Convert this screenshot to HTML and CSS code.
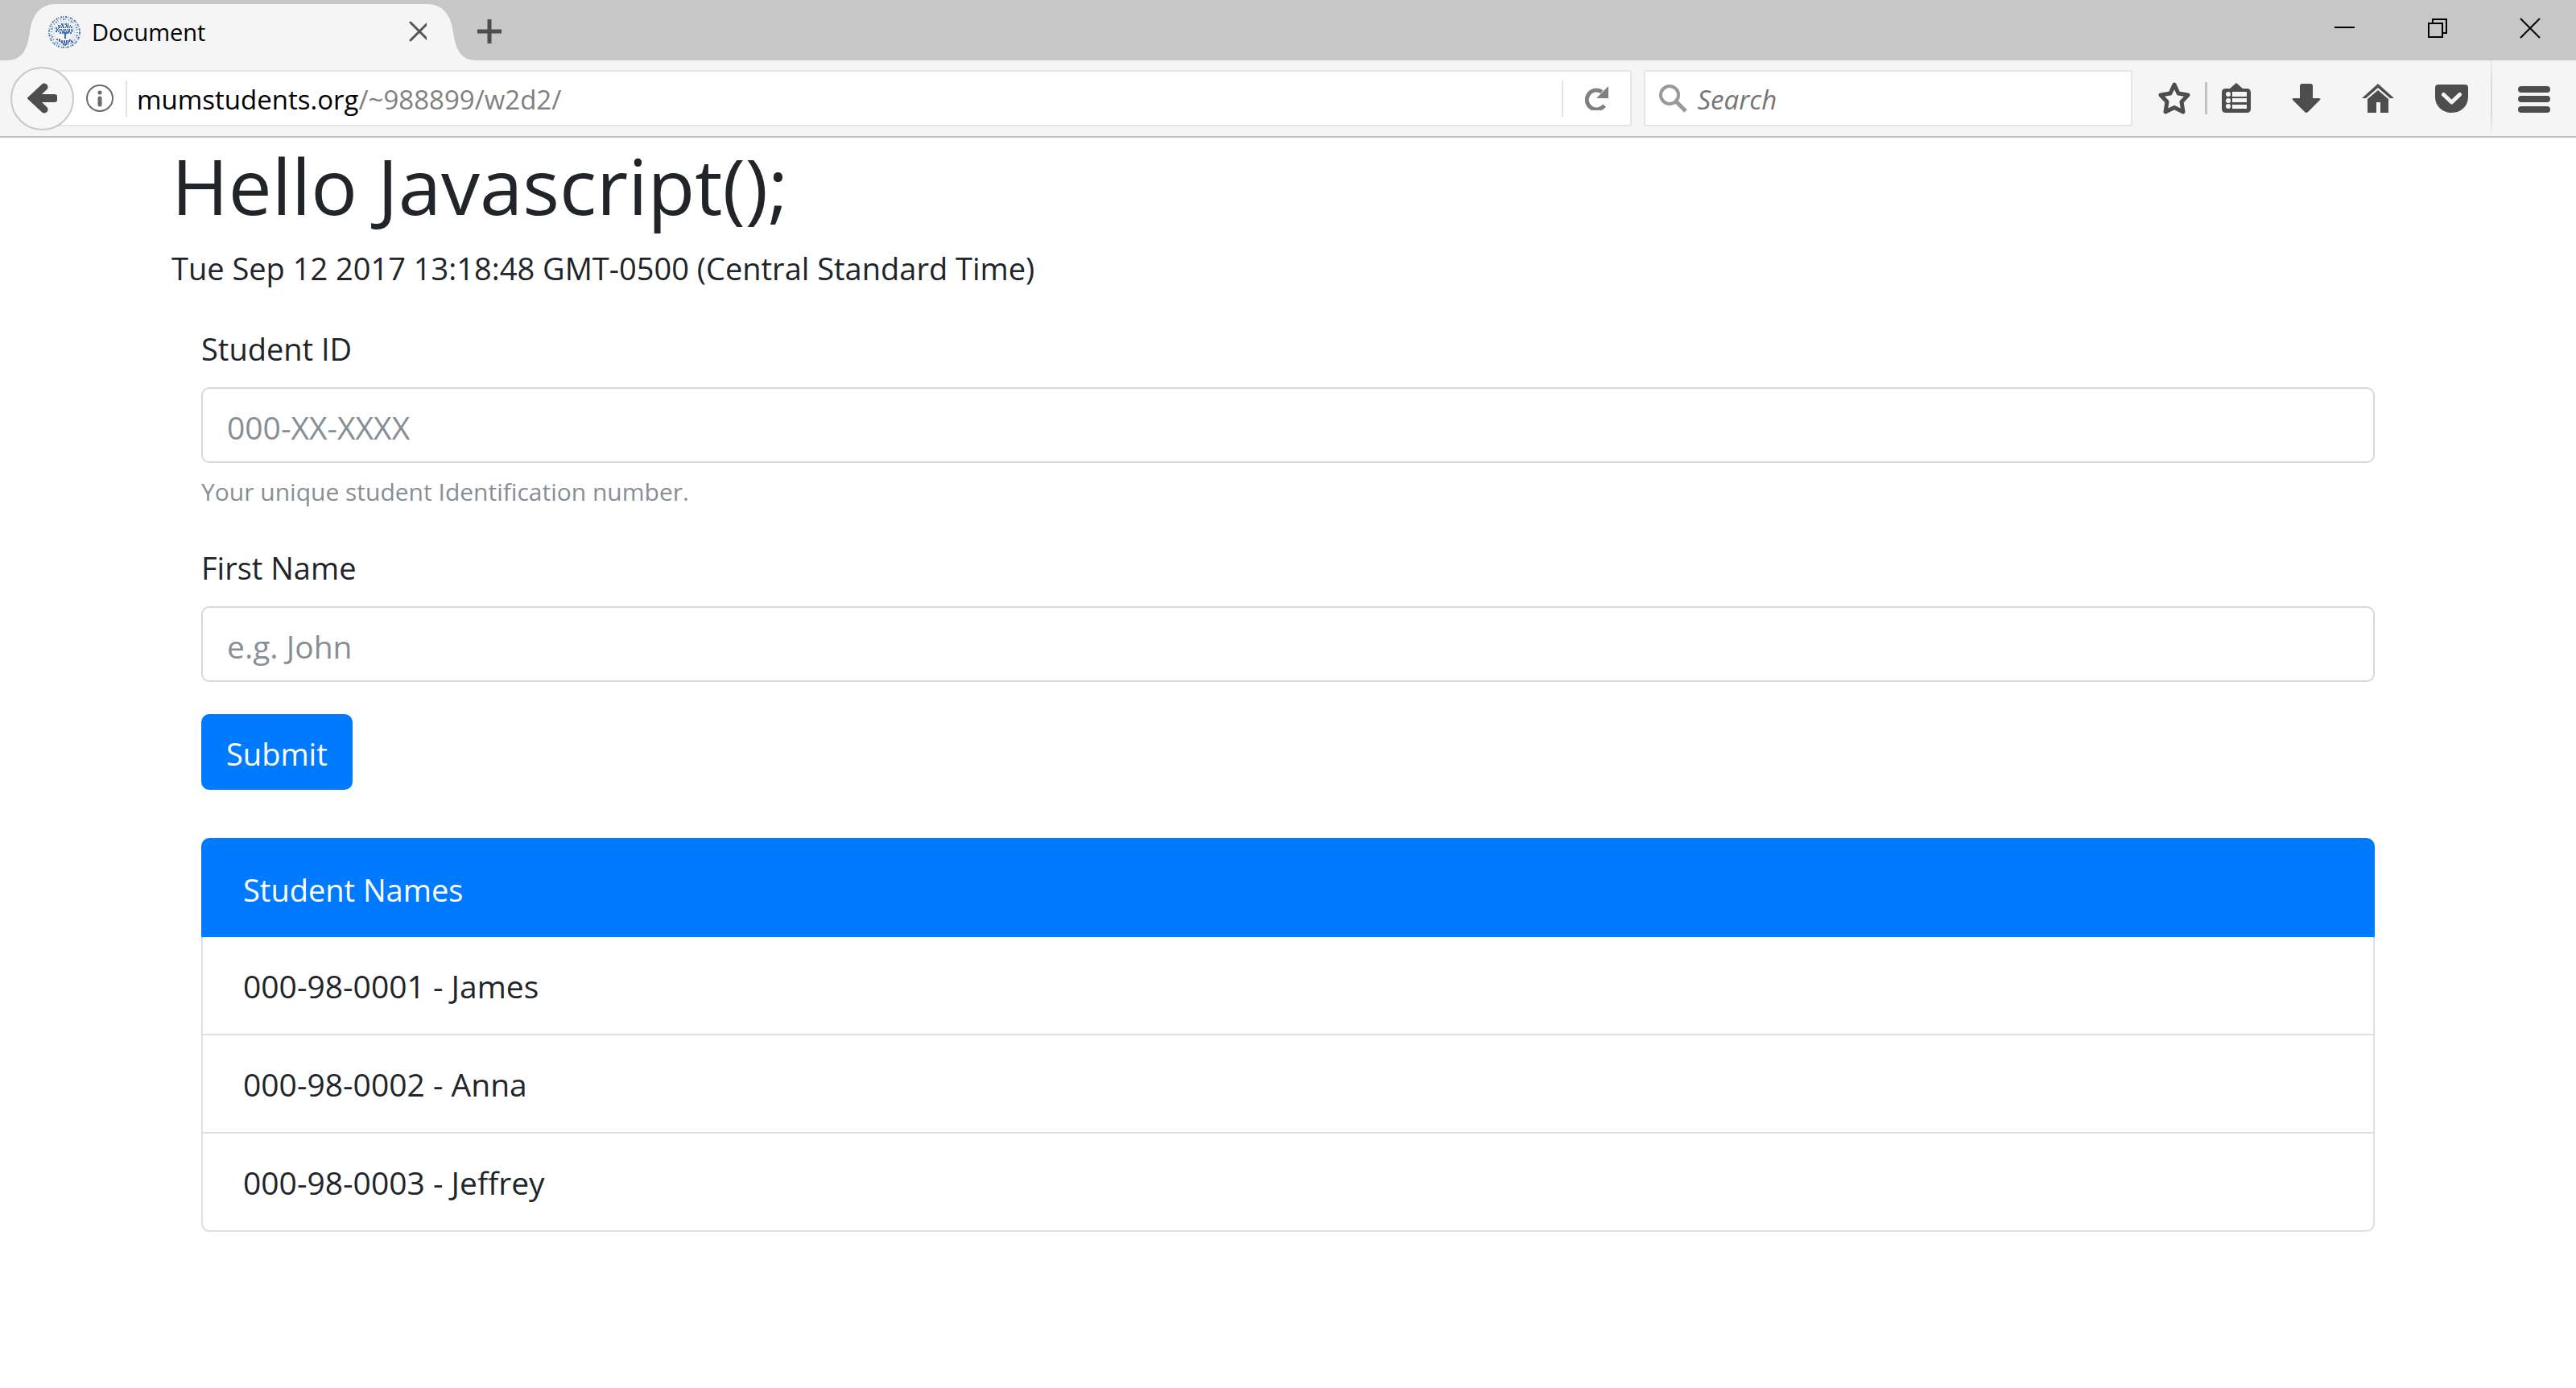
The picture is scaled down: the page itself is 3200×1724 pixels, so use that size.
FILE: index.html
```
<!DOCTYPE html>
<html lang="en">
<head>
<meta charset="utf-8">
<title>Document</title>
<link rel="stylesheet" href="styles.css">
</head>
<body>
<header class="browser">
  <div class="tabstrip">
    <div class="tab">
      <svg class="tab-edge" viewBox="0 0 62 70" width="62" height="70"><path d="M0 70C20 70 26 56 29 35C32 13 42 0 62 0V70Z" fill="#f5f5f5"/></svg>
      <div class="tab-body">
        <svg class="favicon" viewBox="0 0 40 40" width="40" height="40" fill="none" stroke="#3b6cb5">
          <circle cx="20" cy="20" r="19" stroke-width="2" stroke-dasharray="2 1 1 2"/>
          <circle cx="20" cy="20" r="16" stroke-width="2" stroke-dasharray="1 2 2 1 1 3" opacity=".8"/>
          <circle cx="20" cy="20" r="13" stroke-width="1" stroke-dasharray="1 2" opacity=".6"/>
          <path d="M9 15h5M16 10h9M12 12h7M22 12h6M10 17h21M13 14h17M9 19h6M17 19h6M25 19h6M14 21h4M22 21h7" stroke-width="2" stroke-dasharray="2 1 1 1"/>
          <path d="M21 20v8M17 19l4 3 5-3" stroke-width="2"/>
          <path d="M13 31h16M16 33h10M10 29h5M18 35h7M26 29l5 4" stroke-width="2" stroke-dasharray="2 1"/>
        </svg>
        <span class="tab-title">Document</span>
        <button class="icon-button tab-close" aria-label="Close tab"><svg viewBox="0 0 26 26" width="26" height="26"><path d="M2 2L24 24M24 2L2 24" stroke="#555" stroke-width="3" stroke-linecap="round"/></svg></button>
      </div>
      <svg class="tab-edge" viewBox="0 0 62 70" width="62" height="70"><path d="M62 70C42 70 36 56 33 35C30 13 20 0 0 0V70Z" fill="#f5f5f5"/></svg>
    </div>
    <button class="icon-button new-tab" aria-label="New tab"><svg viewBox="0 0 30 30" width="30" height="30"><path d="M15 0V30M0 15H30" stroke="#4d4d4d" stroke-width="5"/></svg></button>
    <div class="window-controls">
      <button class="icon-button window-button" aria-label="Minimize"><svg viewBox="0 0 26 26" width="26" height="26"><path d="M0 12H25" stroke="#000" stroke-width="2"/></svg></button>
      <button class="icon-button window-button" aria-label="Restore"><svg viewBox="0 0 26 26" width="26" height="26" fill="none" stroke="#000" stroke-width="2"><path d="M2 7H19V24H2ZM7 7V2H24V19H19"/></svg></button>
      <button class="icon-button window-button" aria-label="Close window"><svg viewBox="0 0 26 26" width="26" height="26"><path d="M1 1L25 25M25 1L1 25" stroke="#000" stroke-width="2"/></svg></button>
    </div>
  </div>
  <div class="toolbar">
    <button class="icon-button back" aria-label="Back"><svg viewBox="0 0 38 38" width="38" height="38"><path d="M21 5L6 19L21 33" fill="none" stroke="#4d4d4d" stroke-width="9" stroke-linecap="round" stroke-linejoin="miter"/><path d="M8 14H34Q37 14 37 17V21Q37 24 34 24H8Z" fill="#4d4d4d"/></svg></button>
    <div class="address">
      <button class="icon-button" aria-label="Site information"><svg viewBox="0 0 36 36" width="36" height="36"><circle cx="18" cy="18" r="16" fill="none" stroke="#6b6b6b" stroke-width="2"/><circle cx="18" cy="11" r="2.500" fill="#6b6b6b"/><path d="M18 18V26" stroke="#6b6b6b" stroke-width="5" stroke-linecap="round"/></svg></button>
      <span class="address-rule"></span>
      <div class="url" role="textbox" aria-label="Address"><span class="host">mumstudents.org</span>/~988899/w2d2/</div>
      <span class="address-rule"></span>
      <button class="icon-button reload" aria-label="Reload"><svg viewBox="0 0 30 30" width="30" height="30"><path d="M24 24A12 12 0 1 1 21 7" fill="none" stroke="#808080" stroke-width="5"/><path d="M29 0V15H14Z" fill="#808080"/></svg></button>
    </div>
    <div class="search">
      <svg viewBox="0 0 36 36" width="36" height="36" fill="none" stroke="#999"><circle cx="14" cy="14" r="11" stroke-width="4"/><path d="M22 22L34 34" stroke-width="5"/></svg>
      <input class="search-input" type="text" aria-label="Search" placeholder="Search">
    </div>
    <div class="tools">
      <button class="icon-button" aria-label="Bookmark"><svg viewBox="0 0 40 40" width="40" height="40"><path d="M20 3L25 14L37 16L29 24.500L31 37L20 31.500L9 37L11 24.500L3 16L15 14Z" fill="none" stroke="#4d4d4d" stroke-width="5" stroke-linejoin="round"/></svg></button>
      <span class="tools-rule"></span>
      <button class="icon-button" aria-label="Bookmarks list"><svg viewBox="0 0 36 40" width="36" height="40"><path d="M18 1L26 8H31Q36 8 36 13V33Q36 38 31 38H5Q0 38 0 33V13Q0 8 5 8H10Z" fill="#4d4d4d"/><g fill="#f5f5f5"><circle cx="8" cy="15" r="3"/><circle cx="8" cy="23" r="3"/><circle cx="8" cy="30" r="3"/><path d="M13 12H31V18H13ZM13 20H31V25H13ZM13 28H31V33H13Z"/></g></svg></button>
      <button class="icon-button" aria-label="Downloads"><svg viewBox="0 0 36 40" width="36" height="40"><path d="M13 2H23Q26 2 26 5V20H34Q36 20 35 22L20 37Q18 39 16 37L1 22Q0 20 2 20H10V5Q10 2 13 2Z" fill="#4d4d4d"/></svg></button>
      <button class="icon-button" aria-label="Home"><svg viewBox="0 0 40 40" width="40" height="40"><path d="M20 2L40 20H35L20 7L5 20H0Z" fill="#4d4d4d"/><path d="M20 10L33 21V38H23V25H18V38H7V21Z" fill="#4d4d4d"/></svg></button>
      <button class="icon-button" aria-label="Pocket"><svg viewBox="0 0 41 40" width="41" height="40"><path d="M4 3H37Q41 3 41 7V18C41 30 32 38 20.500 38C9 38 0 30 0 18V7Q0 3 4 3Z" fill="#4d4d4d"/><path d="M10.500 15.500L20.500 25L30.500 15.500" fill="none" stroke="#f5f5f5" stroke-width="5" stroke-linecap="round" stroke-linejoin="round"/></svg></button>
    </div>
    <button class="icon-button menu" aria-label="Menu"><svg viewBox="0 0 40 40" width="40" height="40"><path d="M4 9H36M4 21H36M4 34H36" stroke="#4d4d4d" stroke-width="8" stroke-linecap="round"/></svg></button>
  </div>
</header>
<main class="container">
  <h1 class="title">Hello Javascript();</h1>
  <p class="date">Tue Sep 12 2017 13:18:48 GMT-0500 (Central Standard Time)</p>
  <div class="content">
    <form class="form">
      <div class="group">
        <label class="label" for="student-id">Student ID</label>
        <input class="control" id="student-id" type="text" placeholder="000-XX-XXXX" aria-describedby="id-help">
        <small class="help" id="id-help">Your unique student Identification number.</small>
      </div>
      <div class="group">
        <label class="label" for="first-name">First Name</label>
        <input class="control" id="first-name" type="text" placeholder="e.g. John">
      </div>
      <button class="submit" type="submit">Submit</button>
    </form>
    <ul class="list">
      <li class="item item-active">Student Names</li>
      <li class="item">000-98-0001 - James</li>
      <li class="item">000-98-0002 - Anna</li>
      <li class="item">000-98-0003 - Jeffrey</li>
    </ul>
  </div>
</main>
</body>
</html>
```
FILE: styles.css
```
* { box-sizing: border-box; }

body {
  margin: 0;
  background: #fff;
  color: #212529;
  font: 38px/60px "Open Sans", "Noto Sans", sans-serif;
}

button, input { font: inherit; }
svg { display: block; flex: none; }

.icon-button {
  display: flex;
  align-items: center;
  justify-content: center;
  flex: none;
  padding: 0;
  border: 0;
  background: none;
}

/* Browser frame */
.tabstrip {
  display: flex;
  align-items: flex-start;
  height: 75px;
  padding-left: 8px;
  background: #c7c7c7;
}
.tab { display: flex; padding-top: 5px; color: #000; font-size: 29px; }
.tab-body {
  display: flex;
  align-items: center;
  width: 460px;
  height: 70px;
  background: #f5f5f5;
}
.favicon { margin-left: -10px; }
.tab-title { flex: 1; margin-left: 14px; }
.tab-close { margin-right: -4px; margin-bottom: 2px; }
.new-tab { height: 77px; padding-left: 1px; }
.window-controls { display: flex; margin-left: auto; }
.window-button { width: 115px; height: 70px; }

.toolbar {
  display: flex;
  align-items: center;
  height: 96px;
  padding-left: 13px;
  border-bottom: 2px solid #c0c2c1;
  background: #f5f5f5;
}
.back {
  position: relative;
  width: 79px;
  height: 79px;
  border: 2px solid #c8c8c8;
  border-radius: 50%;
  background: #f7f7f7;
}
.address, .search {
  display: flex;
  align-items: center;
  height: 70px;
  border: 2px solid #e5e5e5;
  border-radius: 3px;
  background: #fff;
}
.address {
  flex: 1980 1 0;
  margin-left: -41px;
  padding-left: 53px;
  font-size: 33px;
}
.address-rule { width: 2px; height: 45px; background: #e2e2e2; }
.address .address-rule:nth-of-type(1) { margin-left: 14px; }
.url { flex: 1; padding: 4px 0 0 12px; color: #808080; white-space: nowrap; }
.host { color: #000; }
.reload { width: 83px; }
.search { flex: 605 1 0; margin-left: 15px; padding-left: 16px; }
.search-input {
  flex: 1;
  min-width: 0;
  padding: 4px 0 0 12px;
  border: 0;
  background: none;
  font-size: 33px;
  font-style: italic;
}
.search-input::placeholder { color: #757575; opacity: 1; }
.tools { display: flex; align-items: center; gap: 51px; padding: 0 28px 0 32px; }
.tools-rule { width: 3px; height: 40px; margin: 0 -33px; background: #c2c2c2; }
.menu {
  width: 106px;
  height: 94px;
  border-left: 2px solid;
  border-image: linear-gradient(#eee, #d9d9d9 30%, #d9d9d9 70%, #f5f5f5) 1;
}

/* Page */
.container { max-width: 2850px; margin: 0 auto; padding: 4px 38px 60px; }
.title { margin: 0 0 18px; font-size: 96px; line-height: 110px; font-weight: 400; }
.date { margin: 0 0 40px; }
.content { padding: 0 37px; }
.group { margin-bottom: 40px; }
.label { display: block; margin-bottom: 18px; }
.control {
  display: block;
  width: 100%;
  height: 94px;
  padding: 4px 30px 0;
  border: 2px solid #d9d9d9;
  border-radius: 10px;
  background: #fff;
  color: #495057;
  font-size: 39px;
}
.control::placeholder { color: #868e96; opacity: 1; }
.help { display: block; margin-top: 12px; color: #868e96; font-size: 30px; line-height: 48px; }
.submit {
  display: block;
  height: 94px;
  padding: 4px 31px 0;
  border: 0;
  border-radius: 10px;
  background: #007bff;
  color: #fff;
}
.list {
  margin: 60px 0 0;
  padding: 0;
  border: 2px solid #dfdfdf;
  border-top: 0;
  border-radius: 10px;
  list-style: none;
  font-size: 39px;
}
.item { padding: 31px 50px 29px; }
.item + .item + .item { border-top: 2px solid #dfdfdf; }
.item-active {
  margin: 0 -2px;
  padding: 34px 52px 29px;
  border-radius: 10px 10px 0 0;
  background: #007bff;
  color: #fff;
  font-size: 38px;
}
```
